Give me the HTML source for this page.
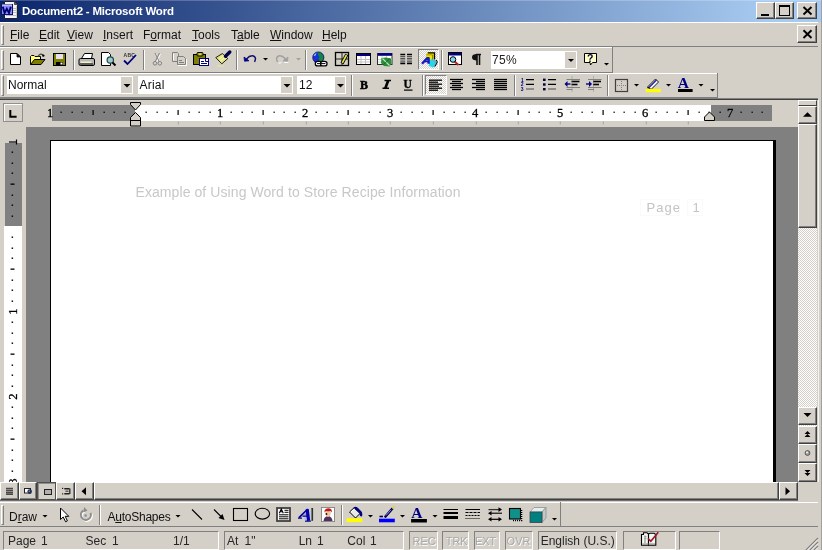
<!DOCTYPE html><html><head><meta charset="utf-8"><style>
*{box-sizing:border-box;margin:0;padding:0}
html,body{width:822px;height:550px;overflow:hidden;background:#D4D0C8;font-family:"Liberation Sans",sans-serif;font-size:12px;color:#000}
body{position:relative}
#root{position:absolute;left:0;top:0;width:822px;height:550px;will-change:transform}
div{position:absolute}
.t{white-space:nowrap;line-height:1}
.u{text-decoration:underline;text-underline-offset:1px}
.grip{width:3px;border-left:1px solid #fff;border-top:1px solid #fff;border-right:1px solid #808080;border-bottom:1px solid #808080}
.rb{background:#D4D0C8;border-top:1px solid #fff;border-left:1px solid #fff;border-right:1px solid #404040;border-bottom:1px solid #404040;box-shadow:inset -1px -1px 0 #808080}
.panel{top:531px;height:19px;border-top:1px solid #808080;border-left:1px solid #808080;border-right:1px solid #fff;border-bottom:1px solid #fff}
svg{position:absolute;left:0;top:0}
</style></head><body><div id="root">
<div style="left:0px;top:0px;width:822px;height:22px;background:linear-gradient(to right,#0A246A 0px,#A6CAF0 770px)"></div>
<div style="left:0px;top:0px;width:822px;height:1px;background:rgba(255,255,255,0.22)"></div>
<div class="t" style="left:22px;top:6px;font-size:11.5px;font-weight:bold;color:#fff;letter-spacing:-0.2px">Document2 - Microsoft Word</div>
<div class="rb" style="left:756px;top:2px;width:19px;height:17px;"></div>
<div class="rb" style="left:775px;top:2px;width:19px;height:17px;"></div>
<div class="rb" style="left:797px;top:2px;width:20px;height:17px;"></div>
<div style="left:761px;top:14px;width:8px;height:2px;background:#000"></div>
<div style="left:779px;top:5px;width:11px;height:11px;border:1px solid #000;border-top-width:2px"></div>
<div style="left:821px;top:0px;width:1px;height:550px;background:#A0A0A0"></div>
<div style="left:0px;top:22px;width:818px;height:1px;background:#fff"></div>
<div class="grip" style="left:1px;top:25px;height:20px"></div>
<div class="t" style="left:10px;top:29px;color:#111"><span class="u">F</span>ile</div>
<div class="t" style="left:39px;top:29px;color:#111"><span class="u">E</span>dit</div>
<div class="t" style="left:67px;top:29px;color:#111"><span class="u">V</span>iew</div>
<div class="t" style="left:103px;top:29px;color:#111"><span class="u">I</span>nsert</div>
<div class="t" style="left:143px;top:29px;color:#111">F<span class="u">o</span>rmat</div>
<div class="t" style="left:192px;top:29px;color:#111"><span class="u">T</span>ools</div>
<div class="t" style="left:231px;top:29px;color:#111">T<span class="u">a</span>ble</div>
<div class="t" style="left:270px;top:29px;color:#111"><span class="u">W</span>indow</div>
<div class="t" style="left:322px;top:29px;color:#111"><span class="u">H</span>elp</div>
<div class="rb" style="left:797px;top:25px;width:20px;height:18px;"></div>
<div style="left:0px;top:46px;width:818px;height:1px;background:#808080"></div>
<div style="left:0px;top:47px;width:612px;height:1px;background:#fff"></div>
<div class="grip" style="left:1px;top:50px;height:20px"></div>
<div style="left:612px;top:47px;width:1px;height:26px;background:#808080"></div>
<div style="left:0px;top:72px;width:613px;height:1px;background:#808080"></div>
<div style="left:73px;top:50px;width:1px;height:20px;background:#808080"></div>
<div style="left:74px;top:50px;width:1px;height:20px;background:#fff"></div>
<div style="left:143px;top:50px;width:1px;height:20px;background:#808080"></div>
<div style="left:144px;top:50px;width:1px;height:20px;background:#fff"></div>
<div style="left:236px;top:50px;width:1px;height:20px;background:#808080"></div>
<div style="left:237px;top:50px;width:1px;height:20px;background:#fff"></div>
<div style="left:305px;top:50px;width:1px;height:20px;background:#808080"></div>
<div style="left:306px;top:50px;width:1px;height:20px;background:#fff"></div>
<div style="left:441px;top:50px;width:1px;height:20px;background:#808080"></div>
<div style="left:442px;top:50px;width:1px;height:20px;background:#fff"></div>
<div style="left:418px;top:49px;width:21px;height:21px;border-top:1px solid #808080;border-left:1px solid #808080;border-right:1px solid #fff;border-bottom:1px solid #fff;background:repeating-conic-gradient(#fff 0 25%,#D4D0C8 0 50%) 0 0/2px 2px"></div>
<div style="left:491px;top:51px;width:86px;height:18px;background:#fff"></div>
<div style="left:565px;top:52px;width:11px;height:16px;background:#D4D0C8"></div>
<div class="t" style="left:492px;top:54px;color:#222;letter-spacing:0.3px">75%</div>
<div style="left:0px;top:73px;width:717px;height:1px;background:#fff"></div>
<div class="grip" style="left:1px;top:75px;height:21px"></div>
<div style="left:717px;top:73px;width:1px;height:25px;background:#808080"></div>
<div style="left:0px;top:97px;width:718px;height:1px;background:#808080"></div>
<div style="left:7px;top:76px;width:126px;height:18px;background:#fff"></div>
<div style="left:121px;top:77px;width:11px;height:16px;background:#D4D0C8"></div>
<div class="t" style="left:8px;top:79px;color:#111">Normal</div>
<div style="left:138px;top:76px;width:155px;height:18px;background:#fff"></div>
<div style="left:281px;top:77px;width:11px;height:16px;background:#D4D0C8"></div>
<div class="t" style="left:139.5px;top:79px;color:#111;letter-spacing:0.2px">Arial</div>
<div style="left:297px;top:76px;width:49px;height:18px;background:#fff"></div>
<div style="left:335px;top:77px;width:10px;height:16px;background:#D4D0C8"></div>
<div class="t" style="left:299px;top:79px;color:#111">12</div>
<div style="left:351px;top:75px;width:1px;height:21px;background:#808080"></div>
<div style="left:352px;top:75px;width:1px;height:21px;background:#fff"></div>
<div style="left:422px;top:75px;width:1px;height:21px;background:#808080"></div>
<div style="left:423px;top:75px;width:1px;height:21px;background:#fff"></div>
<div style="left:514px;top:75px;width:1px;height:21px;background:#808080"></div>
<div style="left:515px;top:75px;width:1px;height:21px;background:#fff"></div>
<div style="left:607px;top:75px;width:1px;height:21px;background:#808080"></div>
<div style="left:608px;top:75px;width:1px;height:21px;background:#fff"></div>
<div style="left:425px;top:75px;width:22px;height:20px;border-top:1px solid #808080;border-left:1px solid #808080;border-right:1px solid #fff;border-bottom:1px solid #fff;background:repeating-conic-gradient(#fff 0 25%,#D4D0C8 0 50%) 0 0/2px 2px"></div>
<div style="left:0px;top:98px;width:818px;height:1px;background:#808080"></div>
<div style="left:0px;top:99px;width:818px;height:1px;background:#404040"></div>
<div style="left:3px;top:103px;width:20px;height:19px;border:1px solid #909090;box-shadow:inset 1px 1px 0 #fff;background:#D4D0C8"></div>
<div style="left:52px;top:105px;width:83px;height:16px;background:#808080"></div>
<div style="left:135px;top:105px;width:576px;height:16px;background:#fff"></div>
<div style="left:711px;top:105px;width:61px;height:16px;background:#808080"></div>
<div style="left:26px;top:127px;width:772px;height:355px;background:#808080"></div>
<div style="left:50px;top:140px;width:726px;height:342px;background:#000"></div>
<div style="left:51px;top:141px;width:722px;height:341px;background:#fff"></div>
<div class="t" style="left:135.5px;top:185px;font-size:14px;color:#c8c8c8;letter-spacing:0.08px">Example of Using Word to Store Recipe Information</div>
<div class="t" style="left:646.5px;top:201px;font-size:13px;color:#c4c4c4;letter-spacing:1px">Page</div>
<div class="t" style="left:692.5px;top:201px;font-size:13px;color:#c4c4c4">1</div>
<div style="left:5px;top:143px;width:17px;height:83px;background:#808080"></div>
<div style="left:4px;top:226px;width:18px;height:256px;background:#fff"></div>
<div style="left:798px;top:100px;width:19px;height:382px;background:repeating-conic-gradient(#fff 0 25%,#D4D0C8 0 50%) 0 0/2px 2px"></div>
<div style="left:818px;top:100px;width:1px;height:382px;background:#F4F4F4"></div>
<div class="rb" style="left:798px;top:100px;width:19px;height:6px;box-shadow:none"></div>
<div class="rb" style="left:798px;top:106px;width:19px;height:18px;"></div>
<div class="rb" style="left:798px;top:124px;width:19px;height:104px;"></div>
<div class="rb" style="left:798px;top:407px;width:19px;height:18px;"></div>
<div class="rb" style="left:798px;top:426px;width:19px;height:18px;"></div>
<div class="rb" style="left:798px;top:444px;width:19px;height:19px;"></div>
<div class="rb" style="left:798px;top:463px;width:19px;height:19px;"></div>
<div class="rb" style="left:0px;top:482px;width:19px;height:18px;"></div>
<div class="rb" style="left:19px;top:482px;width:18px;height:18px;"></div>
<div style="left:37px;top:482px;width:19px;height:18px;border:1px solid #505050;box-shadow:inset 1px 1px 0 #909090;background:#D4D0C8"></div>
<div class="rb" style="left:56px;top:482px;width:19px;height:18px;"></div>
<div class="rb" style="left:75px;top:482px;width:19px;height:18px;"></div>
<div class="rb" style="left:94px;top:482px;width:685px;height:18px;"></div>
<div class="rb" style="left:779px;top:482px;width:19px;height:18px;"></div>
<div style="left:0px;top:500px;width:798px;height:1px;background:#707070"></div>
<div style="left:0px;top:502px;width:818px;height:1px;background:#fff"></div>
<div class="grip" style="left:1px;top:505px;height:20px"></div>
<div style="left:560px;top:502px;width:1px;height:25px;background:#808080"></div>
<div style="left:0px;top:526px;width:818px;height:1px;background:#808080"></div>
<div class="t" style="left:9px;top:511px;color:#111">D<span class="u">r</span>aw</div>
<div class="t" style="left:107.5px;top:511px;color:#111;letter-spacing:-0.25px">A<span class="u">u</span>toShapes</div>
<div style="left:99px;top:505px;width:1px;height:20px;background:#808080"></div>
<div style="left:100px;top:505px;width:1px;height:20px;background:#fff"></div>
<div style="left:341px;top:505px;width:1px;height:20px;background:#808080"></div>
<div style="left:342px;top:505px;width:1px;height:20px;background:#fff"></div>
<div class="panel" style="left:3px;width:216px"></div>
<div class="panel" style="left:224px;width:180px"></div>
<div class="panel" style="left:409px;width:29px"></div>
<div class="panel" style="left:442px;width:27px"></div>
<div class="panel" style="left:474px;width:26px"></div>
<div class="panel" style="left:505px;width:28px"></div>
<div class="panel" style="left:538px;width:79px"></div>
<div class="panel" style="left:623px;width:53px"></div>
<div class="panel" style="left:679px;width:41px"></div>
<div class="t" style="left:8px;top:535px;font-size:12px;color:#262626">Page</div>
<div class="t" style="left:41px;top:535px;font-size:12px;color:#262626">1</div>
<div class="t" style="left:85.5px;top:535px;font-size:12px;color:#262626">Sec</div>
<div class="t" style="left:112px;top:535px;font-size:12px;color:#262626">1</div>
<div class="t" style="left:173px;top:535px;font-size:12px;color:#262626">1/1</div>
<div class="t" style="left:227px;top:535px;font-size:12px;color:#262626">At</div>
<div class="t" style="left:244.5px;top:535px;font-size:12px;color:#262626">1"</div>
<div class="t" style="left:298.7px;top:535px;font-size:12px;color:#262626">Ln</div>
<div class="t" style="left:317px;top:535px;font-size:12px;color:#262626">1</div>
<div class="t" style="left:347.3px;top:535px;font-size:12px;color:#262626">Col</div>
<div class="t" style="left:370px;top:535px;font-size:12px;color:#262626">1</div>
<div class="t" style="left:413.40000000000003px;top:536.8px;font-size:11px;color:#fff">REC</div>
<div class="t" style="left:412.6px;top:536px;font-size:11px;color:#A8A8A8">REC</div>
<div class="t" style="left:446.5px;top:536.8px;font-size:11px;color:#fff">TRK</div>
<div class="t" style="left:445.7px;top:536px;font-size:11px;color:#A8A8A8">TRK</div>
<div class="t" style="left:475.7px;top:536.8px;font-size:11px;color:#fff">EXT</div>
<div class="t" style="left:474.9px;top:536px;font-size:11px;color:#A8A8A8">EXT</div>
<div class="t" style="left:507.40000000000003px;top:536.8px;font-size:11px;color:#fff">OVR</div>
<div class="t" style="left:506.6px;top:536px;font-size:11px;color:#A8A8A8">OVR</div>
<div class="t" style="left:540.7px;top:535px;font-size:12px;color:#262626">English (U.S.)</div>
<svg width="822" height="550" viewBox="0 0 822 550"><defs><clipPath id="vclip" clipPathUnits="userSpaceOnUse"><rect x="0" y="140" width="26" height="342"/></clipPath></defs><path d="M4.5 1.5 H14.5 L17.5 4.5 V18.5 H4.5 Z" fill="#f4f4f0" stroke="#202030"/>
<path d="M14.5 1.5 V4.5 H17.5 Z" fill="#606060" stroke="#303030" stroke-width="0.8"/>
<path d="M13 8.5 H16 M13 10.5 H16 M13 12.5 H16 M6 15.5 H16" stroke="#b0b0c0" stroke-width="0.8"/>
<path d="M16.5 6 V18" stroke="#c8c8c8" stroke-width="1"/>
<rect x="1.5" y="4.5" width="11" height="10" fill="#8c8cf8" stroke="#10106a"/>
<path d="M2 5 H12" stroke="#e0e0ff" stroke-width="1"/>
<path d="M2.8 6.8 L4.6 13 L6.8 8.8 L9 13 L10.8 6.8" fill="none" stroke="#000070" stroke-width="1.9"/><path d="M803.5 7 L811.5 14.5 M811.5 7 L803.5 14.5" stroke="#000" stroke-width="1.9"/><path d="M803.5 30.3 L811.5 38 M811.5 30.3 L803.5 38" stroke="#000" stroke-width="1.9"/><path d="M568.0 59 L574.0 59 L571 62.0 Z" fill="#000"/><path d="M123.5 84 L130.5 84 L127 87.5 Z" fill="#000"/><path d="M283.5 84 L290.5 84 L287 87.5 Z" fill="#000"/><path d="M337.0 84 L344.0 84 L340.5 87.5 Z" fill="#000"/><path d="M263.0 58 L268.0 58 L265.5 60.5 Z" fill="#000"/><path d="M296.0 58 L301.0 58 L298.5 60.5 Z" fill="#a0a0a0"/><path d="M604.0 63 L609.0 63 L606.5 65.5 Z" fill="#000"/><path d="M634.0 84 L639.0 84 L636.5 86.5 Z" fill="#000"/><path d="M666.0 84 L671.0 84 L668.5 86.5 Z" fill="#000"/><path d="M698.5 84 L703.5 84 L701 86.5 Z" fill="#000"/><path d="M710.0 89 L715.0 89 L712.5 91.5 Z" fill="#000"/><path d="M42.5 515 L47.5 515 L45 517.5 Z" fill="#000"/><path d="M175.5 515 L180.5 515 L178 517.5 Z" fill="#000"/><path d="M368.0 515 L373.0 515 L370.5 517.5 Z" fill="#000"/><path d="M400.0 515 L405.0 515 L402.5 517.5 Z" fill="#000"/><path d="M432.5 515 L437.5 515 L435 517.5 Z" fill="#000"/><path d="M552.0 518 L557.0 518 L554.5 520.5 Z" fill="#000"/><text x="50.2" y="116.8" font-family="Liberation Serif" font-size="12.5" text-anchor="middle" fill="#000" stroke="#000" stroke-width="0.3">1</text><rect x="60.5" y="111.6" width="1.3" height="1.3" fill="#000"/><rect x="71.5" y="111.6" width="1.3" height="1.3" fill="#000"/><rect x="81.5" y="111.6" width="1.3" height="1.3" fill="#000"/><rect x="92.5" y="110" width="1.2" height="5" fill="#000"/><rect x="103.5" y="111.6" width="1.3" height="1.3" fill="#000"/><rect x="113.5" y="111.6" width="1.3" height="1.3" fill="#000"/><rect x="124.5" y="111.6" width="1.3" height="1.3" fill="#000"/><rect x="145.5" y="111.6" width="1.3" height="1.3" fill="#000"/><rect x="156.5" y="111.6" width="1.3" height="1.3" fill="#000"/><rect x="166.5" y="111.6" width="1.3" height="1.3" fill="#000"/><rect x="177.5" y="110" width="1.2" height="5" fill="#000"/><rect x="188.5" y="111.6" width="1.3" height="1.3" fill="#000"/><rect x="198.5" y="111.6" width="1.3" height="1.3" fill="#000"/><rect x="209.5" y="111.6" width="1.3" height="1.3" fill="#000"/><text x="220.2" y="116.8" font-family="Liberation Serif" font-size="12.5" text-anchor="middle" fill="#000" stroke="#000" stroke-width="0.3">1</text><rect x="230.5" y="111.6" width="1.3" height="1.3" fill="#000"/><rect x="241.5" y="111.6" width="1.3" height="1.3" fill="#000"/><rect x="251.5" y="111.6" width="1.3" height="1.3" fill="#000"/><rect x="262.5" y="110" width="1.2" height="5" fill="#000"/><rect x="273.5" y="111.6" width="1.3" height="1.3" fill="#000"/><rect x="283.5" y="111.6" width="1.3" height="1.3" fill="#000"/><rect x="294.5" y="111.6" width="1.3" height="1.3" fill="#000"/><text x="305.2" y="116.8" font-family="Liberation Serif" font-size="12.5" text-anchor="middle" fill="#000" stroke="#000" stroke-width="0.3">2</text><rect x="315.5" y="111.6" width="1.3" height="1.3" fill="#000"/><rect x="326.5" y="111.6" width="1.3" height="1.3" fill="#000"/><rect x="336.5" y="111.6" width="1.3" height="1.3" fill="#000"/><rect x="347.5" y="110" width="1.2" height="5" fill="#000"/><rect x="358.5" y="111.6" width="1.3" height="1.3" fill="#000"/><rect x="368.5" y="111.6" width="1.3" height="1.3" fill="#000"/><rect x="379.5" y="111.6" width="1.3" height="1.3" fill="#000"/><text x="390.2" y="116.8" font-family="Liberation Serif" font-size="12.5" text-anchor="middle" fill="#000" stroke="#000" stroke-width="0.3">3</text><rect x="400.5" y="111.6" width="1.3" height="1.3" fill="#000"/><rect x="411.5" y="111.6" width="1.3" height="1.3" fill="#000"/><rect x="421.5" y="111.6" width="1.3" height="1.3" fill="#000"/><rect x="432.5" y="110" width="1.2" height="5" fill="#000"/><rect x="443.5" y="111.6" width="1.3" height="1.3" fill="#000"/><rect x="453.5" y="111.6" width="1.3" height="1.3" fill="#000"/><rect x="464.5" y="111.6" width="1.3" height="1.3" fill="#000"/><text x="475.2" y="116.8" font-family="Liberation Serif" font-size="12.5" text-anchor="middle" fill="#000" stroke="#000" stroke-width="0.3">4</text><rect x="485.5" y="111.6" width="1.3" height="1.3" fill="#000"/><rect x="496.5" y="111.6" width="1.3" height="1.3" fill="#000"/><rect x="506.5" y="111.6" width="1.3" height="1.3" fill="#000"/><rect x="517.5" y="110" width="1.2" height="5" fill="#000"/><rect x="528.5" y="111.6" width="1.3" height="1.3" fill="#000"/><rect x="538.5" y="111.6" width="1.3" height="1.3" fill="#000"/><rect x="549.5" y="111.6" width="1.3" height="1.3" fill="#000"/><text x="560.2" y="116.8" font-family="Liberation Serif" font-size="12.5" text-anchor="middle" fill="#000" stroke="#000" stroke-width="0.3">5</text><rect x="570.5" y="111.6" width="1.3" height="1.3" fill="#000"/><rect x="581.5" y="111.6" width="1.3" height="1.3" fill="#000"/><rect x="591.5" y="111.6" width="1.3" height="1.3" fill="#000"/><rect x="602.5" y="110" width="1.2" height="5" fill="#000"/><rect x="613.5" y="111.6" width="1.3" height="1.3" fill="#000"/><rect x="623.5" y="111.6" width="1.3" height="1.3" fill="#000"/><rect x="634.5" y="111.6" width="1.3" height="1.3" fill="#000"/><text x="645.2" y="116.8" font-family="Liberation Serif" font-size="12.5" text-anchor="middle" fill="#000" stroke="#000" stroke-width="0.3">6</text><rect x="655.5" y="111.6" width="1.3" height="1.3" fill="#000"/><rect x="666.5" y="111.6" width="1.3" height="1.3" fill="#000"/><rect x="676.5" y="111.6" width="1.3" height="1.3" fill="#000"/><rect x="687.5" y="110" width="1.2" height="5" fill="#000"/><rect x="698.5" y="111.6" width="1.3" height="1.3" fill="#000"/><rect x="708.5" y="111.6" width="1.3" height="1.3" fill="#000"/><rect x="719.5" y="111.6" width="1.3" height="1.3" fill="#000"/><text x="730.2" y="116.8" font-family="Liberation Serif" font-size="12.5" text-anchor="middle" fill="#000" stroke="#000" stroke-width="0.3">7</text><rect x="740.5" y="111.6" width="1.3" height="1.3" fill="#000"/><rect x="751.5" y="111.6" width="1.3" height="1.3" fill="#000"/><rect x="761.5" y="111.6" width="1.3" height="1.3" fill="#000"/><rect x="177.8" y="121.5" width="0.9" height="3" fill="#a0a0a0"/><rect x="219.8" y="121.5" width="0.9" height="3" fill="#a0a0a0"/><rect x="262.8" y="121.5" width="0.9" height="3" fill="#a0a0a0"/><rect x="305.8" y="121.5" width="0.9" height="3" fill="#a0a0a0"/><rect x="347.8" y="121.5" width="0.9" height="3" fill="#a0a0a0"/><rect x="389.8" y="121.5" width="0.9" height="3" fill="#a0a0a0"/><rect x="432.8" y="121.5" width="0.9" height="3" fill="#a0a0a0"/><rect x="475.8" y="121.5" width="0.9" height="3" fill="#a0a0a0"/><rect x="517.8" y="121.5" width="0.9" height="3" fill="#a0a0a0"/><rect x="559.8" y="121.5" width="0.9" height="3" fill="#a0a0a0"/><rect x="602.8" y="121.5" width="0.9" height="3" fill="#a0a0a0"/><rect x="645.8" y="121.5" width="0.9" height="3" fill="#a0a0a0"/><rect x="687.8" y="121.5" width="0.9" height="3" fill="#a0a0a0"/><rect x="11.6" y="151.5" width="1.5" height="1.4" fill="#000"/><rect x="11.6" y="162.5" width="1.5" height="1.4" fill="#000"/><rect x="11.6" y="172.5" width="1.5" height="1.4" fill="#000"/><rect x="10.5" y="183.5" width="4" height="1.3" fill="#000"/><rect x="11.6" y="194.5" width="1.5" height="1.4" fill="#000"/><rect x="11.6" y="204.5" width="1.5" height="1.4" fill="#000"/><rect x="11.6" y="215.5" width="1.5" height="1.4" fill="#000"/><rect x="11.6" y="236.5" width="1.5" height="1.4" fill="#000"/><rect x="11.6" y="247.5" width="1.5" height="1.4" fill="#000"/><rect x="11.6" y="257.5" width="1.5" height="1.4" fill="#000"/><rect x="10.5" y="268.5" width="4" height="1.3" fill="#000"/><rect x="11.6" y="279.5" width="1.5" height="1.4" fill="#000"/><rect x="11.6" y="289.5" width="1.5" height="1.4" fill="#000"/><rect x="11.6" y="300.5" width="1.5" height="1.4" fill="#000"/><g clip-path="url(#vclip)"><text x="0" y="0" transform="translate(16.8 311.6) rotate(-90)" font-family="Liberation Serif" stroke="#000" stroke-width="0.3" font-size="12.5" text-anchor="middle" fill="#000">1</text></g><rect x="11.6" y="321.5" width="1.5" height="1.4" fill="#000"/><rect x="11.6" y="332.5" width="1.5" height="1.4" fill="#000"/><rect x="11.6" y="342.5" width="1.5" height="1.4" fill="#000"/><rect x="10.5" y="353.5" width="4" height="1.3" fill="#000"/><rect x="11.6" y="364.5" width="1.5" height="1.4" fill="#000"/><rect x="11.6" y="374.5" width="1.5" height="1.4" fill="#000"/><rect x="11.6" y="385.5" width="1.5" height="1.4" fill="#000"/><g clip-path="url(#vclip)"><text x="0" y="0" transform="translate(16.8 396.6) rotate(-90)" font-family="Liberation Serif" stroke="#000" stroke-width="0.3" font-size="12.5" text-anchor="middle" fill="#000">2</text></g><rect x="11.6" y="406.5" width="1.5" height="1.4" fill="#000"/><rect x="11.6" y="417.5" width="1.5" height="1.4" fill="#000"/><rect x="11.6" y="427.5" width="1.5" height="1.4" fill="#000"/><rect x="10.5" y="438.5" width="4" height="1.3" fill="#000"/><rect x="11.6" y="449.5" width="1.5" height="1.4" fill="#000"/><rect x="11.6" y="459.5" width="1.5" height="1.4" fill="#000"/><rect x="11.6" y="470.5" width="1.5" height="1.4" fill="#000"/><g clip-path="url(#vclip)"><text x="0" y="0" transform="translate(16.8 481.6) rotate(-90)" font-family="Liberation Serif" stroke="#000" stroke-width="0.3" font-size="12.5" text-anchor="middle" fill="#000">3</text></g><path d="M10.3 110 V116.8 H16.6" fill="none" stroke="#000" stroke-width="2"/><path d="M130.5 102.5 H140.5 V104.5 L135.5 110 L130.5 104.5 Z" fill="#D4D0C8" stroke="#000"/><path d="M135.5 112.5 L140.5 117.5 V126 H130.5 V117.5 Z" fill="#D4D0C8" stroke="#000"/><path d="M130.5 120.5 H140.5" stroke="#000"/><path d="M709.5 112 L714.5 117 V120.5 H704.5 V117 Z" fill="#D4D0C8" stroke="#000"/><path d="M9 142 H16" stroke="#555" stroke-width="2"/><path d="M16.5 139.5 V144.5" stroke="#000" stroke-width="1.2"/><path d="M10.5 53.5 H17 L20.5 57 V64.5 H10.5 Z" fill="#fff" stroke="#000" stroke-linejoin="bevel"/><path d="M17 53.5 V57 H20.5 Z" fill="#222" stroke="#000" stroke-width="0.8" stroke-linejoin="bevel"/><path d="M30.5 64.5 V56.5 L31.5 55.5 H34 L35 56.5 H40.5 V59.5" fill="#ffff80" stroke="#000"/><path d="M31.5 57.5 H36 L31.5 63 Z" fill="#ffff60"/><path d="M30.5 64.5 L34.5 59.5 H45 L41 64.5 Z" fill="#808000" stroke="#000"/><path d="M38 56.5 Q39.5 53 43 54.8" fill="none" stroke="#444" stroke-width="1.2"/><circle cx="43.3" cy="55.6" r="1.2" fill="#000"/><rect x="53.5" y="53.5" width="12" height="12" fill="#808000" stroke="#000"/><rect x="56" y="54" width="7" height="5" fill="#e4e0f0"/><rect x="56" y="62" width="7" height="3" fill="#000"/><rect x="60.5" y="62.5" width="2" height="2" fill="#fff"/><path d="M84.5 53.5 H92.5 L91.5 58.5 H81.5 Z" fill="#fff" stroke="#000"/><path d="M80.5 58.5 H93 Q94.5 58.5 94.5 60 V64 Q94.5 65.5 93 65.5 H80.5 Q79 65.5 79 64 V60 Q79 58.5 80.5 58.5 Z" fill="#b8b8b8" stroke="#000"/><rect x="80.5" y="61.5" width="11" height="1.5" fill="#f0f0c0"/><rect x="80" y="63.5" width="13" height="1" fill="#000"/><path d="M101.5 52.5 H108.5 L110.5 54.5 V65.5 H101.5 Z" fill="#fff" stroke="#000"/><circle cx="110.3" cy="60" r="3.2" fill="#9cc" stroke="#244" stroke-width="1.2"/><path d="M112.5 62.5 L115.5 65.5" stroke="#000" stroke-width="2"/><text x="123.5" y="56.6" font-family="Liberation Sans" font-weight="bold" font-size="5" fill="#333" letter-spacing="0.3">ABC</text><path d="M124 60.5 L127.5 64 L136 55" fill="none" stroke="#000080" stroke-width="1.8"/><path d="M155 53 L159.5 62 M159.5 53 L155 62" stroke="#fff" stroke-width="1" transform="translate(1 1)"/><path d="M155 53 L159.5 62 M159.5 53 L155 62" stroke="#808080" stroke-width="1"/><circle cx="155" cy="63.3" r="1.8" fill="none" stroke="#808080"/><circle cx="159.8" cy="63.3" r="1.8" fill="none" stroke="#808080"/><path d="M172.5 52.5 H177.5 L178.5 53.5 V61.5 H172.5 Z" fill="none" stroke="#808080"/><path d="M173.5 53.5 V60.5" stroke="#fff"/><path d="M177.5 56.5 H183.5 L185.5 58.5 V64.5 H177.5 Z" fill="#D4D0C8" stroke="#808080"/><path d="M186.5 59 V65.5 H178" fill="none" stroke="#fff"/><path d="M179 60.5 H182 M179 62.5 H184" stroke="#808080"/><rect x="193.5" y="54.5" width="12" height="10" fill="#808000" stroke="#000"/><rect x="197" y="52.5" width="6" height="3.5" rx="1" fill="#a8a800" stroke="#000"/><circle cx="200" cy="54.2" r="1" fill="#d8d880"/><rect x="199.5" y="58.5" width="9" height="7" fill="#fff" stroke="#000080"/><path d="M201 61.5 H204 M201 63.5 H207" stroke="#000080"/><path d="M205.5 59 V61.5 H208" stroke="#000080" fill="none"/><path d="M215.8 57.6 L222.3 53.6 L227.8 58.6 L221.8 63.8 Z" fill="#e4e488" stroke="#1a1a10" stroke-width="1" stroke-linejoin="round"/><path d="M219 59.5 L223.5 55.5 M220.5 61.2 L225 57.2" stroke="#fafac0" stroke-width="0.9"/><path d="M225.5 56.3 L229.8 52" stroke="#000048" stroke-width="3.4" stroke-linecap="round"/><path d="M217 66 H224" stroke="#e8e8a0" stroke-width="1"/><path d="M246.5 59 Q250 55 253.5 56 Q256.8 57.5 254.5 61.8" fill="none" stroke="#10106a" stroke-width="1.5"/><path d="M244 57 L244.5 61.2 L249 60.8 Z" fill="#000080" stroke="#000080" stroke-width="0.8" stroke-linejoin="round"/><path d="M285.5 59 Q282 55 278.5 56 Q275.2 57.5 277.5 61.8" fill="none" stroke="#a0a0a0" stroke-width="1.5"/><path d="M288 57 L287.5 61.2 L283 60.8 Z" fill="#a0a0a0" stroke="#a0a0a0" stroke-width="0.8" stroke-linejoin="round"/><path d="M278.5 63 Q280 63.5 281.5 62.5 M284 62.5 H288.5" stroke="#fff" fill="none" stroke-width="0.9"/><circle cx="318.3" cy="57.5" r="5.6" fill="#1a30d8"/><path d="M318 52 Q322 52.5 323.5 56 Q324 60 321 62 L319.5 62.5 Q318 59 319.5 57 Q317.5 55 318 52 Z" fill="#108838"/><path d="M316.5 53 Q314 54 313.5 56 L315.5 55.5 Z" fill="#a8d8ff"/><circle cx="318.3" cy="57.5" r="5.6" fill="none" stroke="#0a1a70" stroke-width="0.8"/><rect x="315.3" y="61.3" width="6.4" height="4.6" rx="2.2" fill="#fff" stroke="#000" stroke-width="1.3"/><rect x="320.6" y="61.3" width="6.4" height="4.6" rx="2.2" fill="#fff" stroke="#000" stroke-width="1.3"/><path d="M317 63.6 H325.4" stroke="#000" stroke-width="1"/><rect x="335.5" y="52.5" width="13" height="13" fill="#D4D0C8" stroke="#000" stroke-width="1.3"/><path d="M335.5 59 H348.5 M342 52.5 V65.5" stroke="#222"/><path d="M342 63.5 L346.8 54.5" stroke="#000" stroke-width="3.4"/><path d="M342.3 62.8 L346.5 55" stroke="#e8e840" stroke-width="1.6"/><rect x="356.5" y="53.5" width="14" height="11" fill="#fff" stroke="#000"/><rect x="357" y="54" width="13" height="2" fill="#000080"/><path d="M357 59.5 H370 M357 62 H370 M361 56 V64 M365.5 56 V64" stroke="#c0c0c0"/><rect x="377.5" y="53.5" width="14.5" height="11" fill="#fff" stroke="#303030"/><rect x="378" y="53.2" width="14" height="2.6" fill="#000080"/><path d="M378 59.5 H391.5 M378 62 H391.5 M382 56 V64 M386.5 56 V64" stroke="#c8d8c8"/><path d="M381.5 58 L386 57.5 L391 58.5 L391.5 63 L389.5 66.5 L384 66 L381 63 Z" fill="#2c8a3c"/><path d="M382.5 58.5 L389.5 65.5" stroke="#a8e8a8" stroke-width="1.2"/><path d="M390 58.5 L383 65" stroke="#1a6a2a" stroke-width="1"/><path d="M400.3 54.5 H405.2 M407 54.5 H412 M400.3 63.5 H405.2 M407 63.5 H412" stroke="#000" stroke-width="1.3"/><path d="M400.3 56.5 H405.2 M407 56.5 H412 M400.3 58.3 H405.2 M407 58.3 H412 M400.3 60 H405.2 M407 60 H412 M400.3 61.8 H405.2 M407 61.8 H412" stroke="#555" stroke-width="1.2"/><path d="M426 54.5 L427.8 52.8 H434.5 V59.5 L432.8 61 H426 Z" fill="#e8e000"/><path d="M427.8 52.8 H434.5 V59.5" fill="none" stroke="#000" stroke-width="1.3"/><path d="M426.5 55 H432.5 V60.5" fill="none" stroke="#806800" stroke-width="0.8"/><rect x="427" y="55.5" width="5" height="4.5" fill="#f0e400"/><path d="M429 61 Q429.5 59.2 432 59.2 L436 60 Q437.8 61 437 63 L434.8 66.5 Q433.5 67.6 431.5 67 L428.8 65.8 Z" fill="#20d8f0"/><path d="M436 60 Q437.8 61 437 63 L434.8 66.5" fill="none" stroke="#000" stroke-width="1"/><path d="M432 60 L436 61.2 L433.8 65.5" fill="none" stroke="#80a0b8" stroke-width="0.9"/><path d="M422 63.8 L427 58.2 H428.6 V63.8" fill="none" stroke="#1818c8" stroke-width="2.4" stroke-linejoin="round"/><path d="M424.8 61.5 H428.4" stroke="#1818c8" stroke-width="1.6"/><rect x="448.5" y="52.5" width="13" height="12" fill="#fff" stroke="#000"/><rect x="449" y="53" width="12" height="2.5" fill="#000080"/><path d="M454 61 L458.5 65" stroke="#c02020" stroke-width="2"/><circle cx="453" cy="59.5" r="2.8" fill="#80d8f0" stroke="#000" stroke-width="1"/><path d="M476 54.5 H481 M477 54.5 V65 M479.5 54.5 V65" stroke="#111" stroke-width="1.6"/><path d="M477 54 Q472 54 472 57.2 Q472 60.5 477 60.5 Z" fill="#111"/><path d="M584.5 53.5 H596.5 V62.5 H592.5 L590.5 65 L590 62.5 H584.5 Z" fill="#ffffc8" stroke="#000"/><text x="587" y="62" font-family="Liberation Sans" font-weight="bold" font-size="10.5" fill="#000040">?</text><text x="360" y="88.6" font-family="Liberation Serif" font-weight="bold" font-size="12" fill="#000" stroke="#000" stroke-width="0.5">B</text><path d="M384.5 80.5 H391 M382.5 88.2 H389 M388.2 80.5 L385.3 88.2" stroke="#000" stroke-width="1.4"/><path d="M388.2 80.5 L385.3 88.2" stroke="#000" stroke-width="2.6"/><text x="403.5" y="87.8" font-family="Liberation Serif" font-weight="bold" font-size="11.5" fill="#000" stroke="#000" stroke-width="0.35">U</text><rect x="404" y="89.5" width="8.5" height="1.2" fill="#000"/><path d="M429 80.2 H442" stroke="#000" stroke-width="1.3"/><path d="M429 82.2 H438" stroke="#000" stroke-width="1.3"/><path d="M429 84.2 H442" stroke="#000" stroke-width="1.3"/><path d="M429 86.2 H439" stroke="#000" stroke-width="1.3"/><path d="M429 88.2 H442" stroke="#000" stroke-width="1.3"/><path d="M429 90.2 H438" stroke="#000" stroke-width="1.3"/><path d="M450 79.5 H463" stroke="#000" stroke-width="1.3"/><path d="M452 81.5 H461" stroke="#000" stroke-width="1.3"/><path d="M450 83.5 H463" stroke="#000" stroke-width="1.3"/><path d="M452 85.5 H461" stroke="#000" stroke-width="1.3"/><path d="M450 87.5 H463" stroke="#000" stroke-width="1.3"/><path d="M452 89.5 H461" stroke="#000" stroke-width="1.3"/><path d="M472 79.5 H485" stroke="#000" stroke-width="1.3"/><path d="M476 81.5 H485" stroke="#000" stroke-width="1.3"/><path d="M472 83.5 H485" stroke="#000" stroke-width="1.3"/><path d="M476 85.5 H485" stroke="#000" stroke-width="1.3"/><path d="M472 87.5 H485" stroke="#000" stroke-width="1.3"/><path d="M476 89.5 H485" stroke="#000" stroke-width="1.3"/><path d="M494 79.5 H507" stroke="#000" stroke-width="1.3"/><path d="M494 81.5 H507" stroke="#000" stroke-width="1.3"/><path d="M494 83.5 H507" stroke="#000" stroke-width="1.3"/><path d="M494 85.5 H507" stroke="#000" stroke-width="1.3"/><path d="M494 87.5 H507" stroke="#000" stroke-width="1.3"/><path d="M494 89.5 H507" stroke="#000" stroke-width="1.3"/><text x="521" y="81.6" font-family="Liberation Sans" font-weight="bold" font-size="5" fill="#000080">1</text><text x="520.8" y="86.3" font-family="Liberation Sans" font-weight="bold" font-size="5" fill="#000080">2</text><text x="520.8" y="91" font-family="Liberation Sans" font-weight="bold" font-size="5" fill="#000080">3</text><path d="M526 79.6 H534 M526 84.3 H534" stroke="#000" stroke-width="1.2"/><path d="M526 89 H534" stroke="#606060" stroke-width="1.2"/><rect x="543" y="78.6" width="2.6" height="2.4" fill="#000040"/><rect x="543" y="83.3" width="2.6" height="2.4" fill="#000040"/><rect x="543" y="88" width="2.6" height="2.4" fill="#000040"/><path d="M548 79.6 H556 M548 84.3 H556" stroke="#000" stroke-width="1.2"/><path d="M548 89 H556" stroke="#606060" stroke-width="1.2"/><path d="M566.5 79.5 H580.0" stroke="#808080" stroke-width="1"/><path d="M571.5 81.5 H579.5" stroke="#000" stroke-width="1.6"/><path d="M571.5 84.5 H577.5" stroke="#000" stroke-width="1.6"/><path d="M566.5 87.5 H580.0" stroke="#808080" stroke-width="1"/><path d="M566.5 89.5 H572.5" stroke="#808080" stroke-width="1"/><path d="M572.0 76.5 V92" stroke="#808080" stroke-width="0.8" stroke-dasharray="1 1"/><path d="M566.5 84 H570.5" stroke="#000080" stroke-width="1.4"/><path d="M567.5 81 L564.5 84 L567.5 87 Z" fill="#000080"/><path d="M588 79.5 H601.5" stroke="#808080" stroke-width="1"/><path d="M593 81.5 H601" stroke="#000" stroke-width="1.6"/><path d="M593 84.5 H599" stroke="#000" stroke-width="1.6"/><path d="M588 87.5 H601.5" stroke="#808080" stroke-width="1"/><path d="M588 89.5 H594" stroke="#808080" stroke-width="1"/><path d="M593.5 76.5 V92" stroke="#808080" stroke-width="0.8" stroke-dasharray="1 1"/><path d="M586 84 H590" stroke="#000080" stroke-width="1.4"/><path d="M589 81 L592 84 L589 87 Z" fill="#000080"/><rect x="615.5" y="79.5" width="12" height="12" fill="none" stroke="#404040" stroke-width="1.2"/><path d="M621.5 81 V90 M617 85.5 H626" stroke="#808080" stroke-dasharray="1 1"/><path d="M648 86.5 L655.5 79 L658.5 82 L651 89.5 Z" fill="#fff" stroke="#000" stroke-width="0.9"/><path d="M649 87.5 L656.5 80" stroke="#2020a0" stroke-width="1.4"/><path d="M647 88 L648 86.5 L650.5 89 Z" fill="#000"/><rect x="645.7" y="88.9" width="15" height="3.4" fill="#ffff00"/><text x="677.8" y="87.8" font-family="Liberation Serif" font-weight="bold" font-size="15.5" fill="#000080">A</text><rect x="678" y="89" width="14.6" height="3" fill="#000"/><path d="M60.5 508 V519.5 L63.2 517 L65.6 521.8 L67.4 520.9 L65.2 516.3 H68.8 Z" fill="#fff" stroke="#000" stroke-width="1"/><path d="M83.5 510.5 A5 5 0 1 0 90.5 513" fill="none" stroke="#fff" stroke-width="2" transform="translate(1 1)"/><path d="M83.5 510.5 A5 5 0 1 0 90.5 513" fill="none" stroke="#8c8c8c" stroke-width="2"/><path d="M84 507 L87.5 510.5 L83.5 512.5 Z" fill="#8c8c8c"/><circle cx="85.6" cy="515.5" r="1.2" fill="#8c8c8c"/><path d="M192 509.5 L202 519.5" stroke="#000" stroke-width="1.1"/><path d="M214 509.5 L221 516.5" stroke="#000" stroke-width="1.1"/><path d="M224.5 520 L218.5 518 L222.5 514 Z" fill="#000"/><rect x="233.5" y="508.5" width="14" height="12" fill="none" stroke="#000" stroke-width="1.1"/><ellipse cx="262.4" cy="513.7" rx="7.2" ry="5.4" fill="none" stroke="#000" stroke-width="1.1"/><rect x="277" y="508" width="13" height="13" fill="#fff" stroke="#404040" stroke-width="1.8"/><path d="M279.3 513.2 L281.3 509 L283.3 513.2 M280 511.8 H282.6" fill="none" stroke="#000" stroke-width="1.1"/><path d="M284.5 510.3 H288.5 M284.5 512.3 H288.5 M279 514.8 H288.5 M279 516.8 H288.5 M279 518.8 H288.5" stroke="#000" stroke-width="1"/><path d="M303.8 515.3 L307.2 511.2 L307.6 515.3 Z" fill="#9090f8"/><path d="M299 517.6 L307.8 509" stroke="#0000a0" stroke-width="1.7"/><path d="M307.2 509.2 L308.6 520.8" stroke="#0000b0" stroke-width="3.2"/><path d="M302.5 516.2 H307.5 M298 518.2 H302 M305 521.2 H310.8" stroke="#000090" stroke-width="1.3"/><path d="M305.5 520.5 L305 517" stroke="#a0a0ff" stroke-width="0.8"/><path d="M312.2 508 V520.8" stroke="#2c342c" stroke-width="1.8"/><path d="M310.9 509 V520" stroke="#c0c0e0" stroke-width="0.7"/><rect x="321.5" y="507.5" width="13" height="14" fill="#fff" stroke="#303030" stroke-dasharray="1 1"/><path d="M323.5 521 Q324 516.5 328 516 Q332 516.5 332.5 521 Z" fill="#503060"/><path d="M325.3 514 Q325 510 328 509.5 Q331 510 330.8 514 Q330 517 328 517 Q326 517 325.3 514 Z" fill="#f0c8a0"/><path d="M324.5 512.5 Q324 508.5 328.5 508.2 Q332.5 508.5 331.8 512.5 L330.5 511 Q328 511.5 326 511 Z" fill="#c01818"/><circle cx="326.5" cy="514" r="0.9" fill="#201010"/><path d="M349.5 512 L354 507.8 L360 513.5 L355.5 518 Z" fill="#e8e8e8" stroke="#000" stroke-width="1"/><path d="M351 512 L355 508.5" stroke="#fff" stroke-width="1"/><path d="M353.5 507.5 Q355.5 505.8 358 508 L361.5 511.5 Q362.8 513.5 362 516.5 L360 516 L359.5 513 L355 509 Z" fill="#000080"/><rect x="346.4" y="518.3" width="16" height="3.8" fill="#ffff00"/><path d="M385.5 516.5 L392 509" stroke="#000060" stroke-width="2.6" stroke-linecap="round"/><path d="M386 515.5 L391 509.8" stroke="#c0c0e0" stroke-width="0.7"/><path d="M392.3 508.5 L394.3 506.5" stroke="#d8d840" stroke-width="2"/><path d="M379.5 516.5 H383" stroke="#000060" stroke-width="1.6"/><rect x="379" y="518.7" width="15.8" height="3.6" fill="#0000ff"/><text x="411.2" y="518.2" font-family="Liberation Serif" font-weight="bold" font-size="15.5" fill="#000080">A</text><rect x="411.1" y="519" width="15.8" height="3.5" fill="#000"/><path d="M443.5 509.5 H458" stroke="#000" stroke-width="1"/><rect x="443.5" y="512" width="14.5" height="2" fill="#000"/><rect x="443.5" y="516" width="14.5" height="3" fill="#000"/><path d="M465.5 509.5 H480" stroke="#000" stroke-width="1"/><path d="M465.5 512.5 H480" stroke="#000" stroke-dasharray="3 1"/><path d="M465.5 515.5 H480" stroke="#000" stroke-dasharray="2 1"/><path d="M465.5 518.5 H480" stroke="#000" stroke-dasharray="1 1"/><path d="M488.5 509.6 H500" stroke="#333" stroke-width="1.3"/><path d="M502 509.6 L498.5 507.3 V511.9 Z" fill="#000"/><path d="M490 513.2 H502" stroke="#000" stroke-width="1.1"/><path d="M488 513.2 L491.5 510.9 V515.5 Z" fill="#000"/><path d="M490 519.3 H500" stroke="#000" stroke-width="1.2"/><path d="M488 519.3 L491.5 517 V521.6 Z M502 519.3 L498.5 517 V521.6 Z" fill="#000"/><path d="M521.5 510 V520.5 H512" fill="none" stroke="#000" stroke-width="1.6" stroke-dasharray="1 1"/><rect x="509.5" y="508.5" width="11" height="10.5" fill="#10908a" stroke="#000" stroke-width="1.1"/><path d="M530 512 L534 507.5 H546 L542 512 Z" fill="#e0f0f0" stroke="#909090" stroke-width="0.8"/><path d="M542 512 L546 507.5 V518 L542 522.5 Z" fill="#c0c8c8" stroke="#909090" stroke-width="0.8"/><rect x="530" y="512" width="12" height="10.5" fill="#008080" stroke="#404040" stroke-width="0.8"/><path d="M6 488.6 H13 M6 490.6 H13 M6 492.6 H13 M6 494.2 H13" stroke="#4a4a4a" stroke-width="1.5"/><rect x="24.5" y="488.5" width="6" height="4.5" fill="#fff" stroke="#202020"/><circle cx="29.7" cy="491.6" r="2.3" fill="#203050"/><circle cx="29.3" cy="491.2" r="0.8" fill="#7090c0"/><rect x="44.5" y="489.5" width="7" height="5" fill="#b0b0b0" stroke="#202020"/><rect x="62" y="487.8" width="1.2" height="1.2" fill="#202020"/><rect x="62" y="493.3" width="1.2" height="1.2" fill="#202020"/><path d="M64.3 488.7 H69.5 M64.3 493.8 H69.5" stroke="#202020" stroke-width="1.5"/><path d="M69.8 488.5 V494" stroke="#303030" stroke-width="1.4"/><path d="M65.5 491.2 H68.5" stroke="#404040" stroke-width="1.2"/><path d="M86 487.2 V495.2 L81.5 491.2 Z" fill="#000"/><path d="M785.5 487.2 V495.2 L790 491.2 Z" fill="#000"/><path d="M803 116.8 H812 L807.5 112.2 Z" fill="#000"/><path d="M803.5 413 H811.5 L807.5 417 Z" fill="#000"/><path d="M804.5 434 H810.5 L807.5 431 Z M804.5 437 H810.5 L807.5 434 Z" fill="#000"/><circle cx="807.5" cy="453" r="2.4" fill="#a0a0a0" stroke="#404040" stroke-width="0.8"/><circle cx="807" cy="452.4" r="0.9" fill="#fff"/><path d="M804.5 470 H810.5 L807.5 473 Z M804.5 473 H810.5 L807.5 476 Z" fill="#000"/><path d="M641.5 534.5 H643.5 V532.8 H647 L648.5 534 V545.3 H641.5 Z" fill="#f4f4f4" stroke="#000" stroke-width="1.1"/><path d="M648.5 534 L650 533.3 H654 L655.8 534.5 V545.3 H648.5 Z" fill="#f4f4f4" stroke="#000" stroke-width="1.1"/><path d="M645 535.5 V543 M642.5 544 H655" stroke="#708070" stroke-width="0.9"/><path d="M644.5 536.5 H646.5 M644.5 538.5 H646.5" stroke="#888" stroke-width="0.7"/><path d="M648 538.5 L650.8 541.2 L658.3 532.3" fill="none" stroke="#a01828" stroke-width="1.7"/><path d="M818 538 L806 550 M818 542 L810 550 M818 546 L814 550" stroke="#808080" stroke-width="1.2"/><path d="M818 539.5 L807.5 550 M818 543.5 L811.5 550 M818 547.5 L815.5 550" stroke="#fff" stroke-width="0.8"/><rect x="640.5" y="199.5" width="39" height="16" fill="none" stroke="#f4f4f4" stroke-dasharray="1 1"/><rect x="687.5" y="199.5" width="15" height="16" fill="none" stroke="#f4f4f4" stroke-dasharray="1 1"/></svg>
</div></body></html>
